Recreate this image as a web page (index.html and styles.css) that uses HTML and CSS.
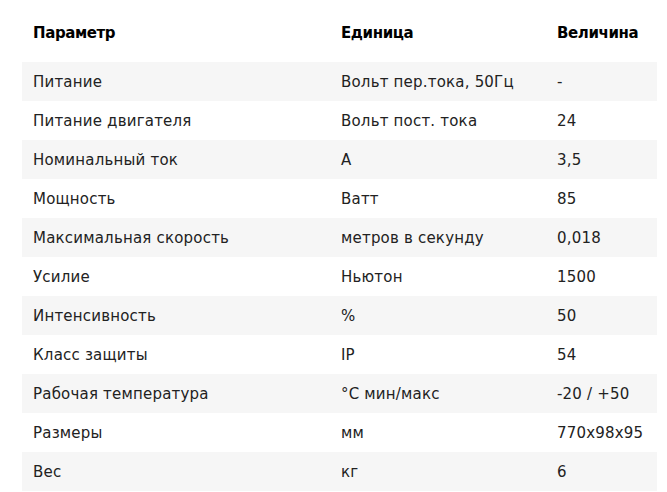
FILE: index.html
```html
<!DOCTYPE html>
<html lang="ru">
<head>
<meta charset="utf-8">
<link rel="stylesheet" href="styles.css">
</head>
<body>
<div class="specs">
  <div class="row head">
    <div class="cell">Параметр</div>
    <div class="cell">Единица</div>
    <div class="cell">Величина</div>
  </div>
  <div class="row"><div class="cell">Питание</div><div class="cell">Вольт пер.тока, 50Гц</div><div class="cell">-</div></div>
  <div class="row"><div class="cell">Питание двигателя</div><div class="cell">Вольт пост. тока</div><div class="cell">24</div></div>
  <div class="row"><div class="cell">Номинальный ток</div><div class="cell">А</div><div class="cell">3,5</div></div>
  <div class="row"><div class="cell">Мощность</div><div class="cell">Ватт</div><div class="cell">85</div></div>
  <div class="row"><div class="cell">Максимальная скорость</div><div class="cell">метров в секунду</div><div class="cell">0,018</div></div>
  <div class="row"><div class="cell">Усилие</div><div class="cell">Ньютон</div><div class="cell">1500</div></div>
  <div class="row"><div class="cell">Интенсивность</div><div class="cell">%</div><div class="cell">50</div></div>
  <div class="row"><div class="cell">Класс защиты</div><div class="cell">IP</div><div class="cell">54</div></div>
  <div class="row"><div class="cell">Рабочая температура</div><div class="cell">°C мин/макс</div><div class="cell">-20 / +50</div></div>
  <div class="row"><div class="cell">Размеры</div><div class="cell">мм</div><div class="cell">770x98x95</div></div>
  <div class="row"><div class="cell">Вес</div><div class="cell">кг</div><div class="cell">6</div></div>
</div>
</body>
</html>
```
FILE: styles.css
```css
html, body {
  margin: 0;
  padding: 0;
  background: #ffffff;
}
body {
  font-family: "DejaVu Sans", "Liberation Sans", sans-serif;
  font-size: 15px;
  letter-spacing: 0.2px;
  color: #222222;
}
.specs {
  width: 635px;
  margin-left: 22px;
  padding-top: 14px;
}
.row {
  display: grid;
  grid-template-columns: 308px 216px 1fr;
  height: 39px;
  align-items: center;
}
.row:nth-child(even) {
  background: #f6f6f6;
}
.cell {
  padding-left: 11px;
  white-space: nowrap;
}
.head {
  height: 38px;
  margin-bottom: 10px;
  font-weight: bold;
  letter-spacing: -0.4px;
  color: #000;
}
```
